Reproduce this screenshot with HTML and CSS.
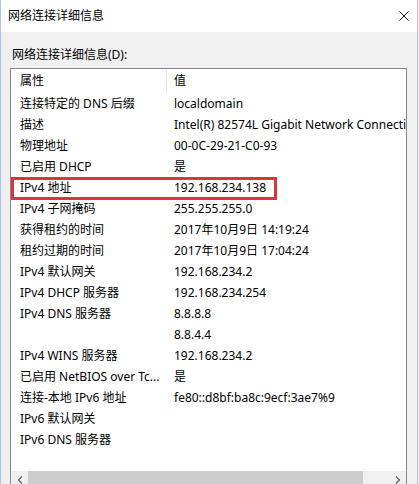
FILE: index.html
```html
<!DOCTYPE html>
<html lang="zh-CN">
<head>
<meta charset="utf-8">
<title>网络连接详细信息</title>
<link rel="stylesheet" href="styles.css">
</head>
<body>
<div class="window">
  <div class="titlebar">
    <span class="title">网络连接详细信息</span>
    <svg class="close" width="10" height="10" viewBox="0 0 10 10"><path d="M0.5 0.5L9.5 9.5M9.5 0.5L0.5 9.5" stroke="#111" stroke-width="1" fill="none"/></svg>
  </div>
  <div class="content">
    <div class="label">网络连接详细信息(D):</div>
    <div class="list">
      <div class="header">
        <div class="cell name sep">属性</div>
        <div class="cell value">值</div>
      </div>
      <div class="rows">
        <div class="row"><div class="cell name">连接特定的 DNS 后缀</div><div class="cell value">localdomain</div></div>
        <div class="row"><div class="cell name">描述</div><div class="cell value">Intel(R) 82574L Gigabit Network Connection</div></div>
        <div class="row"><div class="cell name">物理地址</div><div class="cell value">00-0C-29-21-C0-93</div></div>
        <div class="row"><div class="cell name">已启用 DHCP</div><div class="cell value">是</div></div>
        <div class="row highlight"><div class="cell name">IPv4 地址</div><div class="cell value">192.168.234.138</div><span class="mark"></span></div>
        <div class="row"><div class="cell name">IPv4 子网掩码</div><div class="cell value">255.255.255.0</div></div>
        <div class="row"><div class="cell name">获得租约的时间</div><div class="cell value">2017年10月9日 14:19:24</div></div>
        <div class="row"><div class="cell name">租约过期的时间</div><div class="cell value">2017年10月9日 17:04:24</div></div>
        <div class="row"><div class="cell name">IPv4 默认网关</div><div class="cell value">192.168.234.2</div></div>
        <div class="row"><div class="cell name">IPv4 DHCP 服务器</div><div class="cell value">192.168.234.254</div></div>
        <div class="row"><div class="cell name">IPv4 DNS 服务器</div><div class="cell value">8.8.8.8</div></div>
        <div class="row"><div class="cell name"></div><div class="cell value">8.8.4.4</div></div>
        <div class="row"><div class="cell name">IPv4 WINS 服务器</div><div class="cell value">192.168.234.2</div></div>
        <div class="row"><div class="cell name">已启用 NetBIOS over Tc...</div><div class="cell value">是</div></div>
        <div class="row"><div class="cell name">连接-本地 IPv6 地址</div><div class="cell value">fe80::d8bf:ba8c:9ecf:3ae7%9</div></div>
        <div class="row"><div class="cell name">IPv6 默认网关</div><div class="cell value"></div></div>
        <div class="row"><div class="cell name">IPv6 DNS 服务器</div><div class="cell value"></div></div>
      </div>
      <div class="hscroll">
        <div class="arrow"><svg width="6" height="8" viewBox="0 0 6 8"><path d="M5 0.5L1.5 4L5 7.5" stroke="#606060" stroke-width="1.2" fill="none"/></svg></div>
        <div class="thumb"></div>
        <div class="track"></div>
        <div class="arrow"><svg width="6" height="8" viewBox="0 0 6 8"><path d="M1 0.5L4.5 4L1 7.5" stroke="#606060" stroke-width="1.2" fill="none"/></svg></div>
      </div>
    </div>
  </div>
</div>
</body>
</html>
```

FILE: styles.css
```css
html, body {
  margin: 0;
  padding: 0;
  background: #f0f0f0;
  overflow: hidden;
}

body {
  font-family: "Noto Sans", "Noto Sans CJK SC", sans-serif;
  font-size: 12px;
  color: #000;
}

.window {
  width: 418px;
  height: 484px;
  box-sizing: border-box;
  border-left: 1px solid #a9c6e8;
  border-right: 1px solid #a9c6e8;
  background: #f0f0f0;
  display: flex;
  flex-direction: column;
  overflow: hidden;
}

.titlebar {
  height: 32px;
  flex: none;
  background: #fff;
  display: flex;
  align-items: center;
  justify-content: space-between;
  padding: 0 8px 0 7px;
}

.title {
  line-height: 16px;
}

.close {
  display: block;
}

.content {
  padding: 15px 0 0 9px;
}

.label {
  line-height: 16px;
  padding-left: 2px;
  margin-bottom: 5px;
}

.list {
  width: 397px;
  box-sizing: border-box;
  border: 1px solid #828790;
  background: #fff;
  display: flex;
  flex-direction: column;
}

.header,
.row {
  display: grid;
  grid-template-columns: 156px 1fr;
  align-items: center;
}

.header {
  height: 24px;
}

.row {
  height: 21px;
  position: relative;
}

.rows {
  height: 378px;
}

.cell {
  white-space: nowrap;
  overflow: hidden;
  line-height: 21px;
}

.name {
  padding-left: 9px;
}

.value {
  padding-left: 7px;
}

.header .cell {
  line-height: 24px;
}

.sep {
  border-right: 1px solid #e5e5e5;
}

.mark {
  position: absolute;
  left: 0;
  top: 0;
  width: 266px;
  height: 23px;
  box-sizing: border-box;
  border: 3px solid #d6363c;
}

.hscroll {
  height: 17px;
  display: flex;
  background: #f0f0f0;
}

.arrow {
  width: 17px;
  flex: none;
  display: flex;
  align-items: center;
  justify-content: center;
}

.thumb {
  width: 335px;
  flex: none;
  background: #cdcdcd;
}

.track {
  flex: 1;
}
```
